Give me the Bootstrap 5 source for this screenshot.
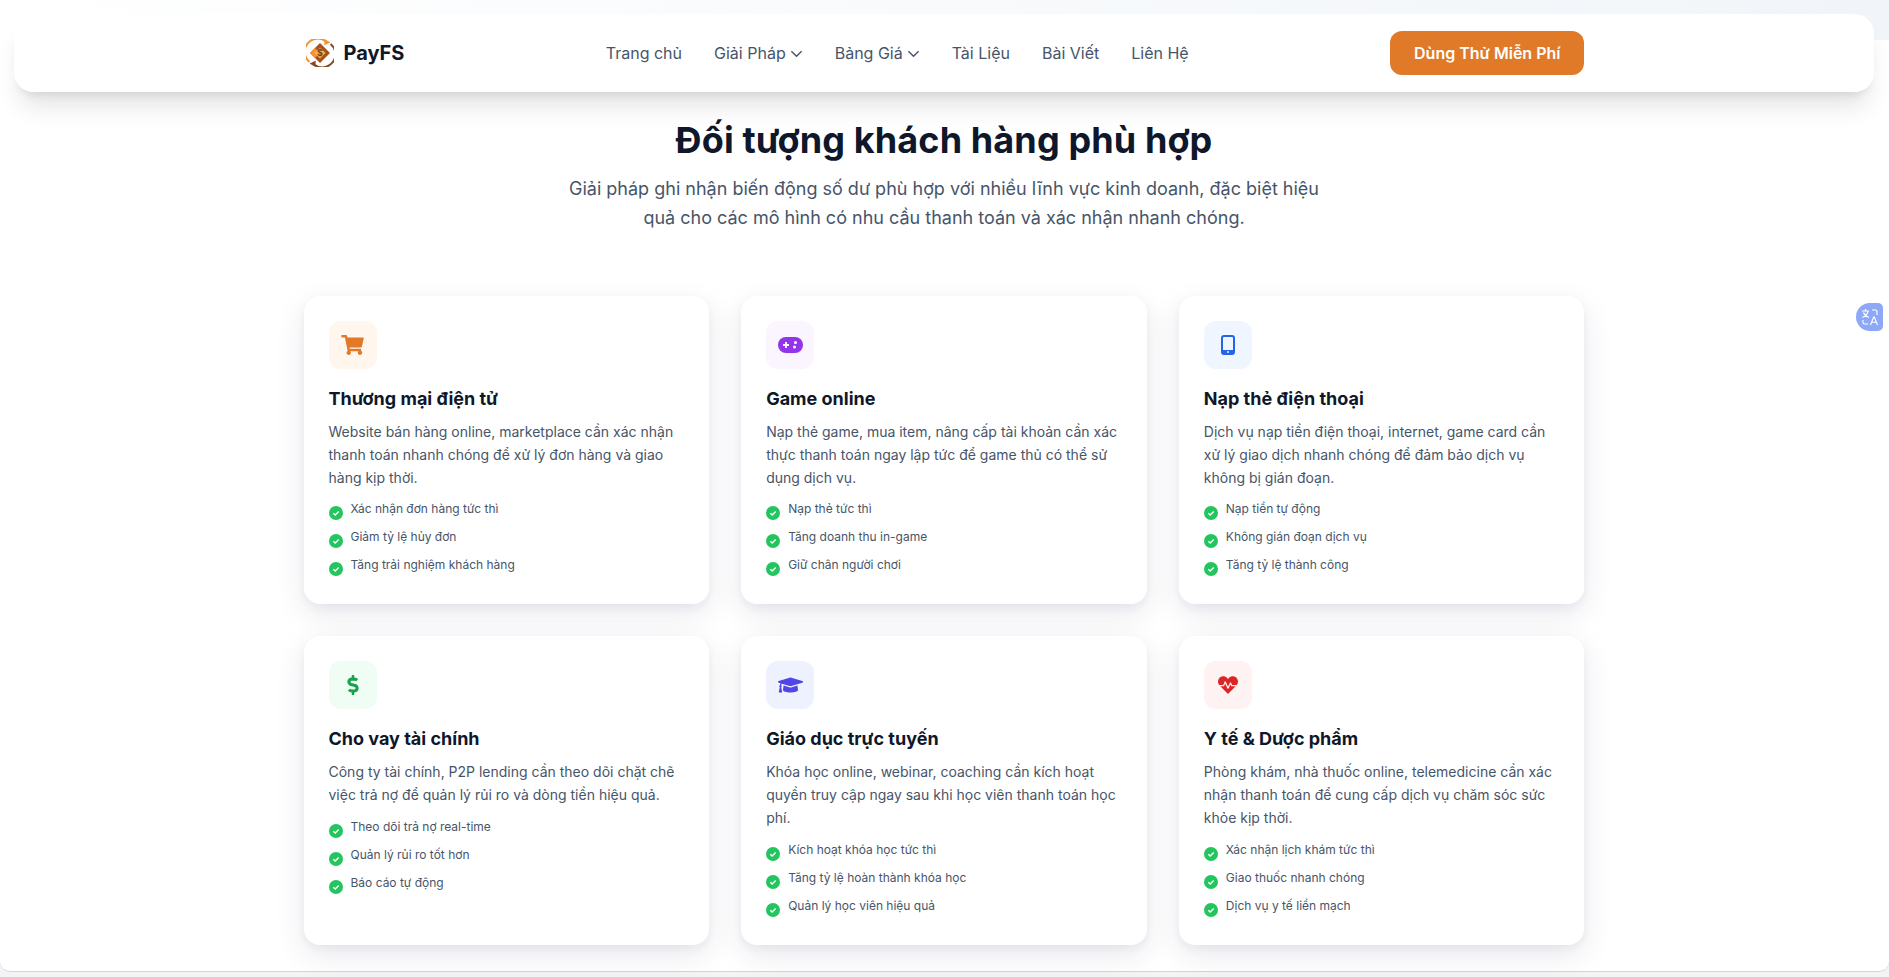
<!DOCTYPE html>
<html lang="vi">
<head>
  <meta charset="UTF-8">
  <title>PayFS - Đối tượng khách hàng</title>
  <meta name="viewport" content="width=device-width, initial-scale=1">
  <link href="https://cdn.jsdelivr.net/npm/bootstrap@5.3.3/dist/css/bootstrap.min.css" rel="stylesheet">
  <style>
    html, body { height: 977px; overflow: hidden; }
    body { background: #f3f4f6; font-family: Inter, "Noto Sans", sans-serif; color: #0f172a; }
    .page-panel {
      height: 972px;
      background: #fff linear-gradient(90deg, #fff, #f1f5f9) top / 100% 40px no-repeat;
      border-bottom: 1px solid #d1d5db;
      border-radius: 0 0 10px 10px;
      padding: 14px 1px 0 0;
    }
    .page-wrap { width: 1281px; margin: 0 auto; }

    .top-bar {
      height: 78px;
      margin: 0 14px;
      padding: 0;
      background: rgba(255, 255, 255, .95);
      border-radius: 20px;
      box-shadow: 0 20px 25px -5px rgba(0, 0, 0, .1), 0 8px 10px -6px rgba(0, 0, 0, .1);
    }
    .top-bar .navbar-brand { font-size: 20px; font-weight: 700; color: #0f172a; padding: 0; margin: 0; gap: 10px; }
    .top-bar .navbar-brand svg { margin-left: 2px; }
    .top-bar .nav { gap: 32px; }
    .top-bar .nav-link { padding: 0; font-size: 16px; color: #475569; gap: 4px; }
    .try-btn {
      background: #e07a28;
      border: 0;
      border-radius: 12px;
      color: #fff;
      font-size: 16px;
      font-weight: 600;
      height: 44px;
      padding: 0 24px;
    }
    .try-btn:hover { background: #cc6d20; color: #fff; }

    .hero-head { padding-top: 28px; margin-bottom: 63.5px; }
    .hero-head h2 { font-size: 36px; line-height: 40px; font-weight: 700; letter-spacing: .12px; margin-bottom: 14px; color: #0f172a; }
    .hero-head p { font-size: 18px; line-height: 29.25px; color: #475569; width: 768px; margin: 0 auto; }

    .cards-row { --bs-gutter-x: 32px; --bs-gutter-y: 32px; }
    .aud-card {
      border: 1px solid transparent;
      border-radius: 16px;
      padding: 24px;
      background: #fff;
      box-shadow: 0 10px 30px rgba(40, 40, 90, .1), 0 4px 8px rgba(40, 40, 90, .05);
    }
    .icon-box { width: 48px; height: 48px; border-radius: 12px; margin-bottom: 16px; }
    .aud-card h3 { font-size: 18px; line-height: 28px; font-weight: 650; color: #0f172a; margin-bottom: 8px; }
    .aud-card p { font-size: 14px; line-height: 22.75px; color: #475569; margin-bottom: 9px; }
    .aud-card ul { margin: 0 0 -3px; }
    .aud-card li { font-size: 12px; line-height: 20px; height: 20px; color: #475569; margin-bottom: 8px; gap: 8px; }
    .aud-card li svg { flex: none; margin-top: 8px; }
    .aud-card li span { padding-top: 1px; }

    .bg-orange { background: #fff7ed; color: #e07a28; }
    .bg-purple { background: #faf5ff; color: #9333ea; }
    .bg-blue { background: #eff6ff; color: #2563eb; }
    .bg-green { background: #f0fdf4; color: #16a34a; }
    .bg-indigo { background: #eef2ff; color: #4f46e5; }
    .bg-red { background: #fef2f2; color: #dc2626; }

    .translate-tab {
      position: absolute;
      top: 299px;
      right: 0;
      width: 38px;
      height: 36px;
      padding: 4px 6px 4px 5px;
      background: #fff;
    }
    .translate-tab span {
      width: 27px;
      height: 28px;
      background: #8ea8f8;
      border-radius: 14px 5px 5px 14px;
    }
  </style>
</head>
<body>

<div class="page-panel">
  <!-- Header -->
  <nav class="navbar top-bar">
    <div class="page-wrap d-flex align-items-center justify-content-between">
      <a class="navbar-brand d-flex align-items-center" href="#">
        <svg width="28" height="28" viewBox="0 0 28 28">
          <path d="M3.5 23A13 13 0 0 1 20 2.5" fill="none" stroke="#f59331" stroke-width="2"/>
          <path d="M18.5 0l6 3.6-6.2 2.6z" fill="#f59331"/>
          <path d="M24.5 5A13 13 0 0 1 8 25.5" fill="none" stroke="#8a4a20" stroke-width="2"/>
          <path d="M9.5 28l-6-3.6 6.2-2.6z" fill="#8a4a20"/>
          <path d="M14 4l10 10-10 10L4 14z" fill="#a8501c"/>
          <path d="M9 9l5 5-5 5-5-5z" fill="#f59331"/>
          <path d="M14 8.5l5.5 5.5-5.5 5.5L8.5 14z" fill="#f9b04f"/>
          <text x="14" y="17.3" font-size="9" font-weight="700" text-anchor="middle" fill="#7a3b12" font-family="Inter">$</text>
        </svg>
        PayFS
      </a>
      <ul class="nav align-items-center">
        <li class="nav-item"><a class="nav-link" href="#">Trang chủ</a></li>
        <li class="nav-item">
          <a class="nav-link d-flex align-items-center" href="#">Giải Pháp
            <svg width="13" height="13" viewBox="0 0 14 14" fill="none" stroke="currentColor" stroke-width="1.5"><path d="M1.5 4.5l5.5 5.5 5.5-5.5"/></svg>
          </a>
        </li>
        <li class="nav-item">
          <a class="nav-link d-flex align-items-center" href="#">Bảng Giá
            <svg width="13" height="13" viewBox="0 0 14 14" fill="none" stroke="currentColor" stroke-width="1.5"><path d="M1.5 4.5l5.5 5.5 5.5-5.5"/></svg>
          </a>
        </li>
        <li class="nav-item"><a class="nav-link" href="#">Tài Liệu</a></li>
        <li class="nav-item"><a class="nav-link" href="#">Bài Viết</a></li>
        <li class="nav-item"><a class="nav-link" href="#">Liên Hệ</a></li>
      </ul>
      <a class="btn try-btn d-flex align-items-center" href="#">Dùng Thử Miễn Phí</a>
    </div>
  </nav>

  <div class="page-wrap">
    <div class="hero-head text-center">
      <h2>Đối tượng khách hàng phù hợp</h2>
      <p>Giải pháp ghi nhận biến động số dư phù hợp với nhiều lĩnh vực kinh doanh, đặc biệt hiệu quả cho các mô hình có nhu cầu thanh toán và xác nhận nhanh chóng.</p>
    </div>

    <div class="row cards-row" id="cardGrid"></div>
  </div>
</div>

<!-- Translate widget -->
<div class="translate-tab d-flex">
  <span class="d-flex align-items-center justify-content-center">
    <svg width="18" height="18" viewBox="0 0 18 18" fill="none" stroke="#fff" stroke-width="1.1">
      <path d="M1 3h7M4.5 1v2M7 3.5C6 6.5 4 8.5 1.5 9.5M2.5 4.5C3.5 7 5.5 8.5 8 9.5"/>
      <path d="M11 2h3.5a1.5 1.5 0 0 1 1.5 1.5V7M2 12v2.5A1.5 1.5 0 0 0 3.5 16H7"/>
      <path d="M9.5 17l3.2-8h.6l3.2 8M10.7 14.2h4.6"/>
    </svg>
  </span>
</div>

<script>
  const icons = {
    cart: '<svg width="23" height="20" viewBox="0 0 576 512" fill="currentColor"><path d="M528.12 301.319l47.273-208C578.806 78.301 567.391 64 551.99 64H159.208l-9.166-44.81C147.758 8.021 137.93 0 126.529 0H24C10.745 0 0 10.745 0 24v16c0 13.255 10.745 24 24 24h69.883l70.248 343.435C147.325 417.1 136 435.222 136 456c0 30.928 25.072 56 56 56s56-25.072 56-56c0-15.674-6.447-29.835-16.824-40h209.647C430.447 426.165 424 440.326 424 456c0 30.928 25.072 56 56 56s56-25.072 56-56c0-22.172-12.888-41.332-31.579-50.405l5.517-24.276c3.413-15.018-8.002-29.319-23.403-29.319H218.117l-6.545-32h293.145c11.206 0 20.92-7.754 23.403-18.681z"/></svg>',
    game: '<svg width="25" height="16" viewBox="0 0 25 16"><rect width="25" height="16" rx="8" fill="currentColor"/><path d="M8 5v6M5 8h6" stroke="#fff" stroke-width="1.8"/><circle cx="17.5" cy="5.5" r="1.5" fill="#fff"/><circle cx="16.5" cy="10" r="1.5" fill="#fff"/></svg>',
    phone: '<svg width="14" height="20" viewBox="0 0 14 20"><rect x="1" y="1" width="12" height="18" rx="2" fill="none" stroke="currentColor" stroke-width="2"/><rect x="1" y="15" width="12" height="4" rx="1" fill="currentColor"/><circle cx="7" cy="17" r="1" fill="#eff6ff"/></svg>',
    dollar: '<svg width="12" height="20" viewBox="0 0 288 512" fill="currentColor"><path d="M209.2 233.4l-108-31.6C88.7 198.2 80 186.5 80 173.5c0-16.3 13.2-29.5 29.5-29.5h66.3c12.2 0 24.2 3.7 34.2 10.5 6.1 4.1 14.3 3.1 19.5-2l34.8-34c7.1-6.9 6.1-18.4-1.8-24.5C238 74.8 207.4 64.1 176 64V16c0-8.8-7.2-16-16-16h-32c-8.8 0-16 7.2-16 16v48h-2.5C45.8 64-5.4 118.7.5 183.6c4.2 46.1 39.4 83.6 83.8 96.6l102.5 30c12.5 3.7 21.2 15.3 21.2 28.3 0 16.3-13.2 29.5-29.5 29.5h-66.3C100 368 88 364.3 78 357.5c-6.1-4.1-14.3-3.1-19.5 2l-34.8 34c-7.1 6.9-6.1 18.4 1.8 24.5 24.5 19.2 55.1 29.9 86.5 30v48c0 8.8 7.2 16 16 16h32c8.8 0 16-7.2 16-16v-48.2c46.6-.9 90.3-28.6 105.7-72.7 21.5-61.6-14.6-124.8-72.5-141.7z"/></svg>',
    cap: '<svg width="25" height="20" viewBox="0 0 640 512" fill="currentColor"><path d="M622.34 153.2L343.4 67.5c-15.2-4.67-31.6-4.67-46.79 0L17.66 153.2c-23.54 7.23-23.54 38.36 0 45.59l48.63 14.94c-10.67 13.19-17.23 29.28-17.88 46.9C38.78 266.15 32 276.11 32 288c0 10.78 5.68 19.85 13.86 25.65L20.33 428.53C18.11 438.52 25.71 448 35.94 448h56.11c10.24 0 17.84-9.48 15.62-19.47L82.14 313.65C90.32 307.85 96 298.78 96 288c0-11.57-6.47-21.25-15.66-26.87.76-15.02 8.44-28.3 20.69-36.72L296.6 284.5c9.06 2.78 26.44 6.25 46.79 0l278.95-85.7c23.55-7.24 23.55-38.36 0-45.6zM352.79 315.09c-28.53 8.76-52.84 3.92-65.59 0l-145.02-44.55L128 384c0 35.35 85.96 64 192 64s192-28.65 192-64l-14.18-113.47-145.03 44.56z"/></svg>',
    heart: '<svg width="20" height="20" viewBox="0 0 512 512" fill="currentColor"><path d="M320.2 243.8l-49.7 99.4c-6 12.1-23.4 11.7-28.9-.6l-56.9-126.3-30 71.7H60.6l182.5 186.5c7.1 7.3 18.6 7.3 25.7 0L451.4 288H342.3l-22.1-44.2zM473.7 73.9l-2.4-2.5c-51.5-52.6-135.8-52.6-187.4 0L256 100l-27.9-28.5c-51.5-52.7-135.9-52.7-187.4 0l-2.4 2.4C-10.4 123.7-12.5 203 31 256h102.4l35.9-86.2c5.4-12.9 23.6-13.2 29.4-.4l58.2 129.3 49-97.9c5.9-11.8 22.7-11.8 28.6 0l27.6 55.2H481c43.5-53 41.4-132.3-7.3-182.1z"/></svg>'
  };

  const checkIcon = '<svg width="14" height="14" viewBox="0 0 14 14"><circle cx="7" cy="7" r="7" fill="#22c55e"/><path d="M4.3 7.2l1.9 1.8 3.5-3.6" fill="none" stroke="#fff" stroke-width="1.4"/></svg>';

  const audiences = [
    { icon: 'cart', tone: 'bg-orange', title: 'Thương mại điện tử',
      text: 'Website bán hàng online, marketplace cần xác nhận thanh toán nhanh chóng để xử lý đơn hàng và giao hàng kịp thời.',
      points: ['Xác nhận đơn hàng tức thì', 'Giảm tỷ lệ hủy đơn', 'Tăng trải nghiệm khách hàng'] },
    { icon: 'game', tone: 'bg-purple', title: 'Game online',
      text: 'Nạp thẻ game, mua item, nâng cấp tài khoản cần xác thực thanh toán ngay lập tức để game thủ có thể sử dụng dịch vụ.',
      points: ['Nạp thẻ tức thì', 'Tăng doanh thu in-game', 'Giữ chân người chơi'] },
    { icon: 'phone', tone: 'bg-blue', title: 'Nạp thẻ điện thoại',
      text: 'Dịch vụ nạp tiền điện thoại, internet, game card cần xử lý giao dịch nhanh chóng để đảm bảo dịch vụ không bị gián đoạn.',
      points: ['Nạp tiền tự động', 'Không gián đoạn dịch vụ', 'Tăng tỷ lệ thành công'] },
    { icon: 'dollar', tone: 'bg-green', title: 'Cho vay tài chính',
      text: 'Công ty tài chính, P2P lending cần theo dõi chặt chẽ việc trả nợ để quản lý rủi ro và dòng tiền hiệu quả.',
      points: ['Theo dõi trả nợ real-time', 'Quản lý rủi ro tốt hơn', 'Báo cáo tự động'] },
    { icon: 'cap', tone: 'bg-indigo', title: 'Giáo dục trực tuyến',
      text: 'Khóa học online, webinar, coaching cần kích hoạt quyền truy cập ngay sau khi học viên thanh toán học phí.',
      points: ['Kích hoạt khóa học tức thì', 'Tăng tỷ lệ hoàn thành khóa học', 'Quản lý học viên hiệu quả'] },
    { icon: 'heart', tone: 'bg-red', title: 'Y tế & Dược phẩm',
      text: 'Phòng khám, nhà thuốc online, telemedicine cần xác nhận thanh toán để cung cấp dịch vụ chăm sóc sức khỏe kịp thời.',
      points: ['Xác nhận lịch khám tức thì', 'Giao thuốc nhanh chóng', 'Dịch vụ y tế liền mạch'] }
  ];

  document.getElementById('cardGrid').innerHTML = audiences.map(a => `
    <div class="col-4">
      <div class="aud-card h-100">
        <div class="icon-box d-flex align-items-center justify-content-center ${a.tone}">${icons[a.icon]}</div>
        <h3>${a.title.replace('&', '&amp;')}</h3>
        <p>${a.text}</p>
        <ul class="list-unstyled">
          ${a.points.map(p => `<li class="d-flex">${checkIcon}<span>${p}</span></li>`).join('')}
        </ul>
      </div>
    </div>`).join('');
</script>
<script src="https://cdn.jsdelivr.net/npm/bootstrap@5.3.3/dist/js/bootstrap.bundle.min.js"></script>
</body>
</html>
